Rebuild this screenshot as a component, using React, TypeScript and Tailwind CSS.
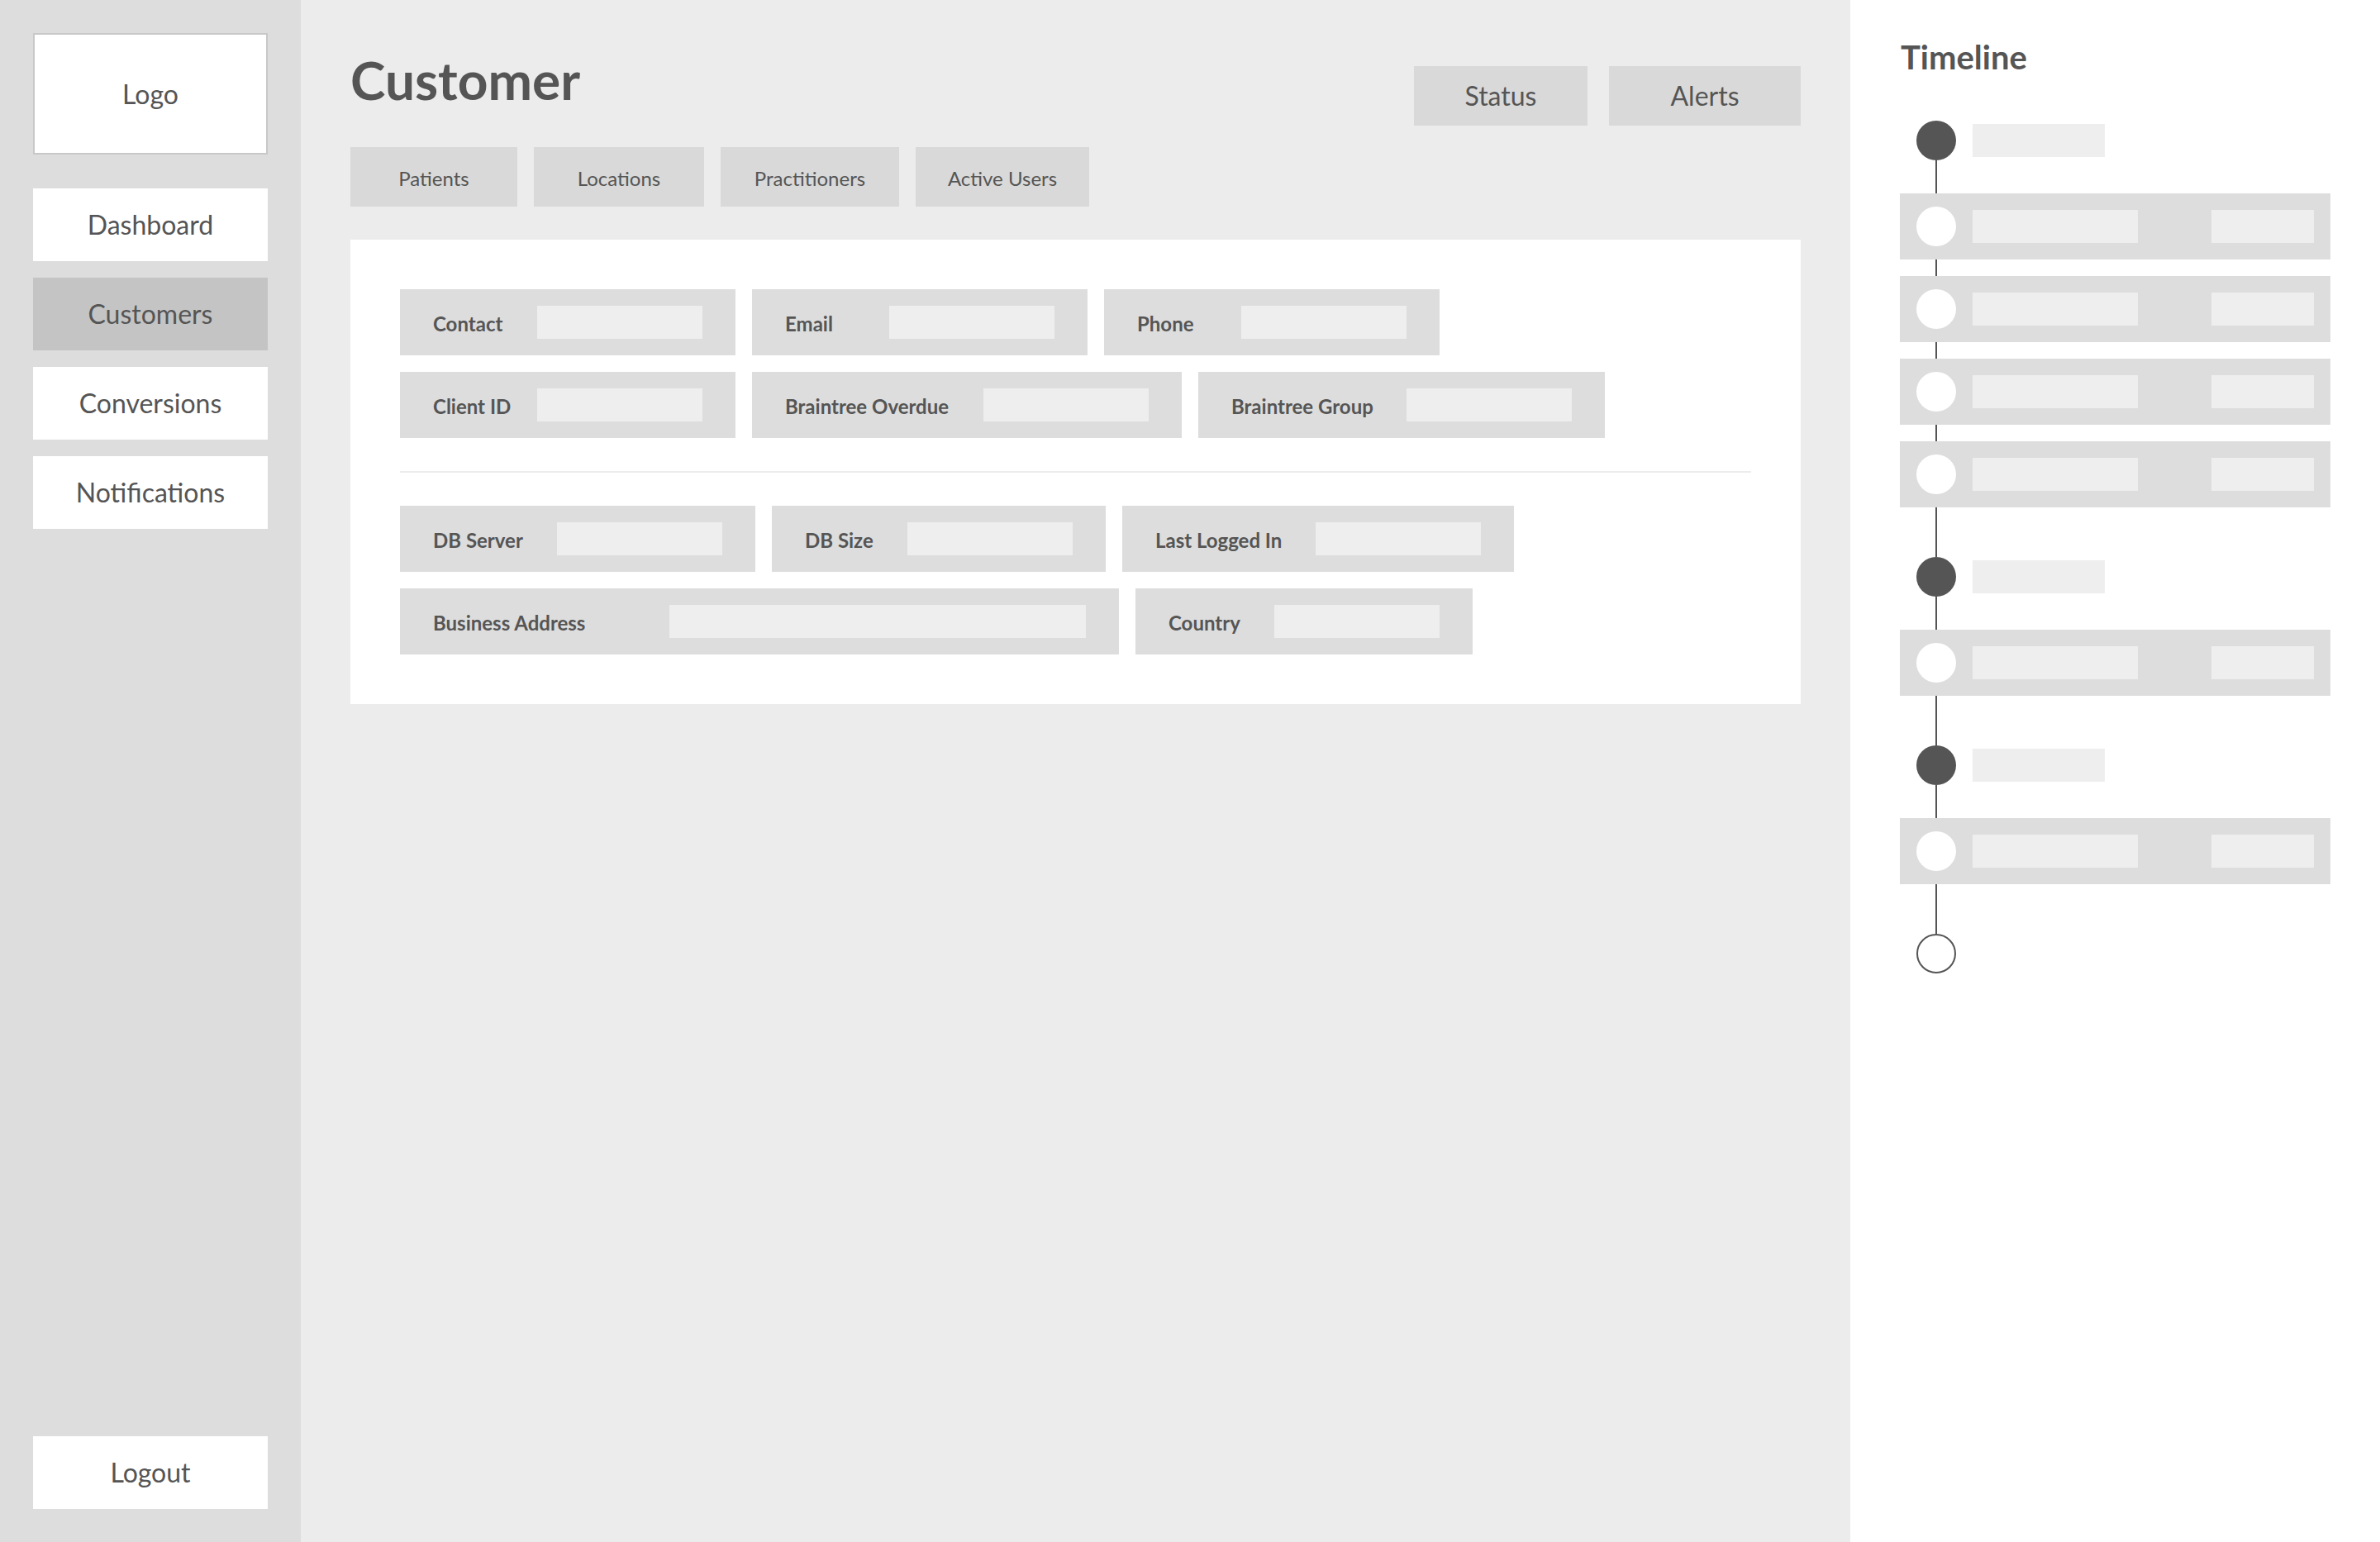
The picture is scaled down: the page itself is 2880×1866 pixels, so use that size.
import React from 'react';

type FieldDef = { label: string; labelW: string; inputW?: string };

const rowsTop: FieldDef[][] = [
  [
    { label: 'Contact', labelW: 'w-[126px]' },
    { label: 'Email', labelW: 'w-[126px]' },
    { label: 'Phone', labelW: 'w-[126px]' },
  ],
  [
    { label: 'Client ID', labelW: 'w-[126px]' },
    { label: 'Braintree Overdue', labelW: 'w-[240px]' },
    { label: 'Braintree Group', labelW: 'w-[212px]' },
  ],
];

const rowsBottom: FieldDef[][] = [
  [
    { label: 'DB Server', labelW: 'w-[150px]' },
    { label: 'DB Size', labelW: 'w-[124px]' },
    { label: 'Last Logged In', labelW: 'w-[194px]' },
  ],
  [
    { label: 'Business Address', labelW: 'w-[286px]', inputW: 'w-[504px]' },
    { label: 'Country', labelW: 'w-[128px]' },
  ],
];

const navItems = ['Dashboard', 'Customers', 'Conversions', 'Notifications'];
const tabs = [
  { label: 'Patients', w: 'w-[202px]' },
  { label: 'Locations', w: 'w-[206px]' },
  { label: 'Practitioners', w: 'w-[216px]' },
  { label: 'Active Users', w: 'w-[210px]' },
];

function Field({ label, labelW, inputW = 'w-[200px]' }: FieldDef) {
  return (
    <div className="flex h-[80px] items-center bg-[#dddddd] px-[40px]">
      <span className={`${labelW} shrink-0 pt-[3px] text-[24px] font-bold text-[#555555]`}>{label}</span>
      <div className={`${inputW} h-[40px] bg-[#eeeeee]`} />
    </div>
  );
}

function FieldRows({ rows }: { rows: FieldDef[][] }) {
  return (
    <div className="flex flex-col gap-[20px]">
      {rows.map((row, i) => (
        <div key={i} className="flex gap-[20px]">
          {row.map(f => (
            <Field key={f.label} {...f} />
          ))}
        </div>
      ))}
    </div>
  );
}

function Segment({ h }: { h: string }) {
  return <div className={`${h} ml-[43px] w-[2px] bg-[#555555]`} />;
}

function Milestone() {
  return (
    <div className="flex h-[48px] items-center gap-[20px] pl-[20px]">
      <div className="h-[48px] w-[48px] rounded-full bg-[#555555]" />
      <div className="h-[40px] w-[160px] bg-[#eeeeee]" />
    </div>
  );
}

function Event() {
  return (
    <div className="flex h-[80px] items-center bg-[#dddddd] px-[20px]">
      <div className="h-[48px] w-[48px] rounded-full bg-white" />
      <div className="ml-[20px] h-[40px] w-[200px] bg-[#eeeeee]" />
      <div className="ml-auto h-[40px] w-[124px] bg-[#eeeeee]" />
    </div>
  );
}

export default function App() {
  return (
    <div className="flex h-screen w-full font-['Lato',sans-serif] text-[#555555]">
      {/* Sidebar */}
      <aside className="flex w-[364px] shrink-0 flex-col bg-[#dddddd] px-[40px] pt-[40px] pb-[40px]">
        <div className="flex h-[147px] items-center justify-center border-2 border-[#c8c8c8] bg-white text-[32px]">
          Logo
        </div>
        <nav className="mt-[41px] flex flex-col gap-[20px]">
          {navItems.map(item => (
            <div
              key={item}
              className={`flex h-[88px] items-center justify-center text-[32px] ${
                item === 'Customers' ? 'bg-[#c4c4c4]' : 'bg-white'
              }`}
            >
              {item}
            </div>
          ))}
        </nav>
        <div className="mt-auto flex h-[88px] items-center justify-center bg-white text-[32px]">
          Logout
        </div>
      </aside>

      {/* Main */}
      <main className="flex-1 bg-[#ececec] px-[60px] pt-[59px]">
        <div className="flex items-start justify-between">
          <h1 className="text-[64px] leading-[1.2] font-bold">Customer</h1>
          <div className="mt-[21px] flex gap-[26px]">
            <div className="flex h-[72px] w-[210px] items-center justify-center bg-[#d9d9d9] text-[32px]">
              Status
            </div>
            <div className="flex h-[72px] w-[232px] items-center justify-center bg-[#d9d9d9] text-[32px]">
              Alerts
            </div>
          </div>
        </div>

        <div className="mt-[26px] flex gap-[20px]">
          {tabs.map(t => (
            <div
              key={t.label}
              className={`${t.w} flex h-[72px] items-center justify-center bg-[#d9d9d9] pt-[3px] text-[24px]`}
            >
              {t.label}
            </div>
          ))}
        </div>

        <section className="mt-[40px] flex flex-col bg-white p-[60px]">
          <FieldRows rows={rowsTop} />
          <div className="my-[40px] h-[2px] bg-[#ececec]" />
          <FieldRows rows={rowsBottom} />
        </section>
      </main>

      {/* Timeline */}
      <aside className="w-[641px] shrink-0 bg-white px-[60px] pt-[45px]">
        <h2 className="pl-[1px] text-[40px] leading-[1.2] font-bold">Timeline</h2>
        <div className="mt-[53px] flex flex-col">
          <Milestone />
          <Segment h="h-[40px]" />
          <Event />
          <Segment h="h-[20px]" />
          <Event />
          <Segment h="h-[20px]" />
          <Event />
          <Segment h="h-[20px]" />
          <Event />
          <Segment h="h-[60px]" />
          <Milestone />
          <Segment h="h-[40px]" />
          <Event />
          <Segment h="h-[60px]" />
          <Milestone />
          <Segment h="h-[40px]" />
          <Event />
          <Segment h="h-[60px]" />
          <div className="ml-[20px] h-[48px] w-[48px] rounded-full border-2 border-[#555555] bg-white" />
        </div>
      </aside>
    </div>
  );
}
